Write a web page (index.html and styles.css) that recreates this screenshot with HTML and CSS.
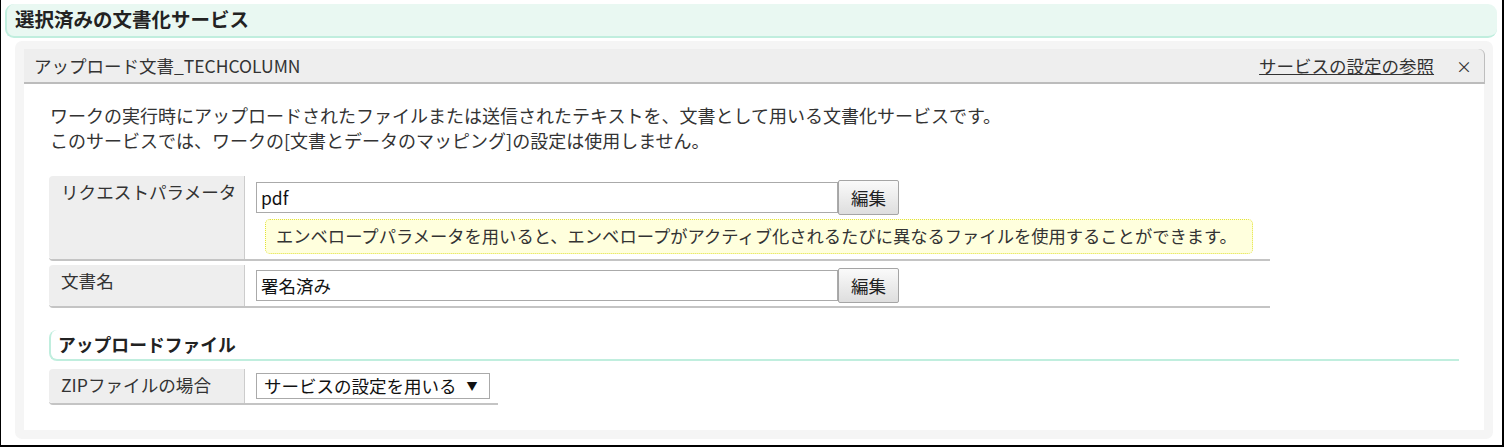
FILE: index.html
```html
<!DOCTYPE html>
<html lang="ja">

<head>
    <meta charset="UTF-8">
    <meta name="viewport" content="width=device-width, initial-scale=1.0">
    <title>選択済みの文書化サービス</title>
    <link rel="stylesheet" href="styles.css">
</head>

<body>
    <div class="frame">
        <div class="pageTitle">選択済みの文書化サービス</div>

        <div class="panel">
            <div class="panelHead">
                <span class="panelName">アップロード文書_TECHCOLUMN</span>
                <span class="panelLinks">
                    <a class="refLink">サービスの設定の参照</a>
                    <span class="closeX">×</span>
                </span>
            </div>

            <div class="panelBody">
                <p class="desc">
                    ワークの実行時にアップロードされたファイルまたは送信されたテキストを、文書として用いる文書化サービスです。<br />
                    このサービスでは、ワークの[文書とデータのマッピング]の設定は使用しません。
                </p>

                <div class="inRow">
                    <div class="rowLabel">リクエストパラメータ</div>
                    <div class="rowValue">
                        <div class="editLine">
                            <div class="textBox">pdf</div>
                            <button class="editBtn">編集</button>
                        </div>
                        <div class="tip">エンベロープパラメータを用いると、エンベロープがアクティブ化されるたびに異なるファイルを使用することができます。</div>
                    </div>
                </div>

                <div class="inRow rowShort">
                    <div class="rowLabel">文書名</div>
                    <div class="rowValue">
                        <div class="editLine">
                            <div class="textBox">署名済み</div>
                            <button class="editBtn">編集</button>
                        </div>
                    </div>
                </div>

                <div class="subTitle">アップロードファイル</div>

                <div class="inRow rowZip">
                    <div class="rowLabel">ZIPファイルの場合</div>
                    <div class="rowValue">
                        <div class="selBox">サービスの設定を用いる<span class="selArrow">▼</span></div>
                    </div>
                </div>
            </div>
        </div>
    </div>
</body>

</html>
```

FILE: styles.css
```css
body {
    margin: 0;
    padding: 0;
    background-color: white;
    font-family: "Noto Sans CJK JP", "Noto Sans", sans-serif;
    color: rgb(51, 51, 51);
}

.frame {
    box-sizing: border-box;
    width: 1504px;
    height: 447px;
    padding: 4px 5px 0 4px;
    border-left: 1px solid black;
    border-right: 2px solid black;
    border-bottom: 2px solid black;
}

.pageTitle {
    box-sizing: border-box;
    height: 34px;
    padding-left: 8px;
    background-color: rgb(233, 248, 242);
    border-left: 2px solid rgb(192, 238, 222);
    border-bottom: 2px solid rgb(192, 238, 222);
    border-radius: 9px;
    font-size: 19.5px;
    font-weight: bold;
    line-height: 30px;
    color: rgb(34, 34, 34);
}

.panel {
    box-sizing: border-box;
    height: 398px;
    margin: 3px 4px 0 10px;
    padding: 8px 9px 9px 9px;
    background-color: rgb(245, 245, 245);
    border-radius: 7px;
    display: flex;
    flex-direction: column;
}

.panelHead {
    box-sizing: border-box;
    height: 35px;
    padding: 0 12px 0 10px;
    background-color: rgb(238, 238, 238);
    border-bottom: 2px solid rgb(188, 188, 188);
    border-top-right-radius: 6px;
    box-shadow: 1px 0 0 rgb(190, 190, 190);
    display: flex;
    justify-content: space-between;
    align-items: center;
    font-size: 17.5px;
    line-height: 32px;
}

.refLink {
    text-decoration: underline;
    color: rgb(51, 51, 51);
}

.closeX {
    margin-left: 18px;
    font-size: 16px;
}

.panelBody {
    flex: 1;
    background-color: white;
    padding: 19px 25px 0 25px;
}

.desc {
    margin: 0 0 23px 1px;
    font-size: 18px;
    line-height: 25px;
}

.inRow {
    width: 1221px;
    display: flex;
    border-bottom: 2px solid rgb(196, 196, 196);
    border-radius: 4px 0 0 4px;
}

.rowShort {
    margin-top: 4px;
}

.rowLabel {
    box-sizing: border-box;
    width: 196px;
    flex-shrink: 0;
    padding: 3px 0 0 12px;
    background-color: rgb(238, 238, 238);
    border-right: 1px solid rgb(204, 204, 204);
    border-radius: 4px 0 0 4px;
    font-size: 17.6px;
    line-height: 26px;
}

.rowValue {
    flex: 1;
    padding: 4px 0 5px 11px;
}

.rowShort .rowValue {
    padding: 3px 0 3px 11px;
}

.editLine {
    display: flex;
    align-items: center;
}

.textBox {
    box-sizing: border-box;
    width: 582px;
    height: 31px;
    padding-left: 4px;
    border: 1px solid rgb(170, 170, 170);
    font-size: 17.5px;
    line-height: 29px;
    color: rgb(17, 17, 17);
}

.editBtn {
    box-sizing: border-box;
    width: 61px;
    height: 35px;
    margin-left: 0;
    padding: 0;
    border: 1px solid rgb(165, 165, 165);
    border-radius: 2px;
    background: linear-gradient(rgb(250, 250, 250), rgb(222, 222, 222));
    font-family: "Noto Sans CJK JP", sans-serif;
    font-size: 17.5px;
    color: rgb(34, 34, 34);
}

.tip {
    box-sizing: border-box;
    width: 988px;
    height: 35px;
    margin: 4px 0 0 9px;
    padding-left: 10px;
    background-color: rgb(255, 255, 221);
    border: 1px dotted rgb(226, 226, 58);
    border-radius: 5px;
    font-size: 17.3px;
    line-height: 32px;
}

.subTitle {
    box-sizing: border-box;
    height: 31px;
    margin-top: 22px;
    padding-left: 7px;
    border-left: 2px solid rgb(192, 238, 222);
    border-bottom: 2px solid rgb(192, 238, 222);
    border-radius: 8px 0 0 8px;
    font-size: 17.8px;
    font-weight: bold;
    line-height: 28px;
    color: rgb(34, 34, 34);
}

.rowZip {
    width: auto;
    display: inline-flex;
    margin-top: 8px;
}

.rowZip .rowValue {
    padding: 4px 8px 4px 11px;
}

.selBox {
    box-sizing: border-box;
    width: 234px;
    height: 26px;
    padding-left: 7px;
    border: 1px solid rgb(170, 170, 170);
    font-size: 17.5px;
    line-height: 24px;
    color: rgb(17, 17, 17);
}

.selArrow {
    margin-left: 10px;
    font-size: 11px;
    vertical-align: 2px;
}
```
